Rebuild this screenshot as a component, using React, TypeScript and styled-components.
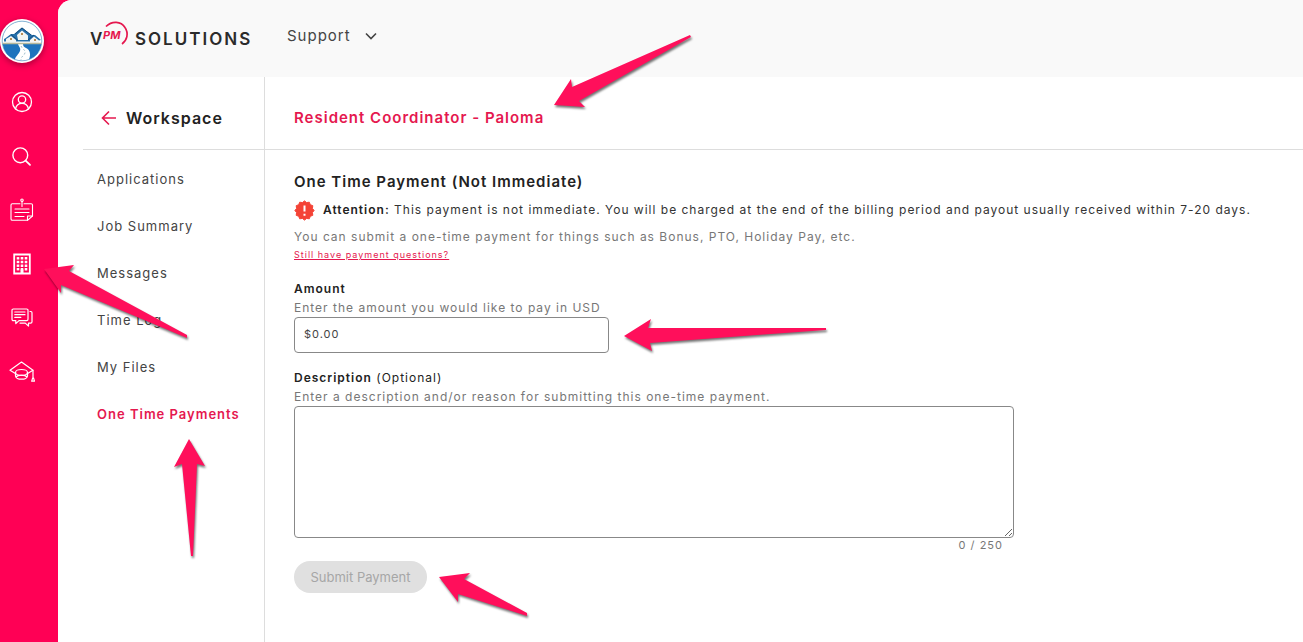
import React, { useState } from 'react';
import styled, { createGlobalStyle } from 'styled-components';

const pink = '#ff0055';
const brand = '#e5184f';

const GlobalStyle = createGlobalStyle`
  *, *::before, *::after { box-sizing: border-box; }
  body {
    margin: 0;
    background: #fff;
    color: #222;
    font-family: Inter, "Liberation Sans", sans-serif;
    letter-spacing: 1px;
  }
  button, input, textarea { font: inherit; letter-spacing: inherit; }
`;

const Shell = styled.div`
  position: relative;
  display: flex;
  min-height: 100vh;
  background: ${pink};
  overflow: hidden;
`;

const Rail = styled.nav`
  flex: none;
  width: 58px;
  padding: 19px 14px 0 0;
  display: flex;
  flex-direction: column;
  align-items: center;
  gap: 12px;
`;

const Avatar = styled.a`
  display: block;
  width: 44px;
  height: 44px;
  border-radius: 50%;
  box-shadow: 0 2px 6px rgba(0, 0, 0, 0.35);
  svg { display: block; }
`;

const RailList = styled.ul`
  margin: 0;
  padding: 0;
  list-style: none;
`;

const RailLink = styled.a`
  display: flex;
  align-items: center;
  justify-content: center;
  width: 44px;
  height: 54px;
`;

const Content = styled.div`
  flex: 1;
  min-width: 0;
  display: flex;
  flex-direction: column;
  background: #fff;
  border-top-left-radius: 14px;
  overflow: hidden;
`;

const TopBar = styled.header`
  display: flex;
  align-items: center;
  gap: 33px;
  height: 77px;
  padding: 0 32px 5px;
  background: #f9f9f9;
`;

const Logo = styled.a`
  display: block;
  height: 32px;
  svg { display: block; }
`;

const SupportButton = styled.button`
  display: flex;
  align-items: center;
  gap: 14px;
  padding: 0;
  border: 0;
  background: none;
  color: #444;
  font-size: 15px;
  line-height: 24px;
`;

const Columns = styled.div`
  flex: 1;
  display: flex;
`;

const Side = styled.aside`
  flex: none;
  width: 207px;
  padding-left: 25px;
  border-right: 1px solid #ddd;
`;

const SideHead = styled.div`
  display: flex;
  align-items: center;
  gap: 8px;
  height: 73px;
  padding: 10px 0 0 18px;
  border-bottom: 1px solid #ddd;
`;

const BackLink = styled.a`
  display: flex;
`;

const SideTitle = styled.h2`
  margin: 0;
  font-size: 16px;
  line-height: 24px;
  font-weight: 600;
`;

const SideList = styled.ul`
  margin: 0;
  padding: 5px 0 0 14px;
  list-style: none;
`;

const SideLink = styled.a<{ $active?: boolean }>`
  display: flex;
  align-items: center;
  height: 47px;
  font-size: 13px;
  white-space: nowrap;
  text-decoration: none;
  font-weight: ${(p) => (p.$active ? 600 : 400)};
  color: ${(p) => (p.$active ? brand : '#444')};
`;

const Main = styled.main`
  flex: 1;
  min-width: 0;
`;

const MainHead = styled.div`
  display: flex;
  align-items: center;
  height: 73px;
  padding: 10px 29px 0;
  border-bottom: 1px solid #ddd;
`;

const JobTitle = styled.h1`
  margin: 0;
  font-size: 15px;
  line-height: 24px;
  font-weight: 600;
  color: ${brand};
`;

const Form = styled.form`
  padding: 20px 29px;
  font-size: 12px;
  line-height: 20px;
`;

const FormTitle = styled.h3`
  margin: 0;
  font-size: 15px;
  line-height: 24px;
  font-weight: 600;
`;

const Notice = styled.p`
  display: flex;
  align-items: center;
  gap: 8px;
  margin: 4px 0 6px;
  line-height: 24px;
  color: #333;
  svg { flex: none; }
`;

const Strong = styled.strong`
  font-weight: 600;
  color: #222;
`;

const Hint = styled.p`
  margin: 0;
  line-height: 18px;
  color: #777;
`;

const HelpLink = styled.a`
  display: block;
  width: fit-content;
  font-size: 9px;
  line-height: 18px;
  color: ${brand};
`;

const Field = styled.div`
  margin-top: 15px;
`;

const Label = styled.label`
  display: block;
`;

const AmountInput = styled.input`
  display: block;
  width: 100%;
  max-width: 315px;
  height: 36px;
  padding: 0 9px 2px;
  border: 1px solid #888;
  border-radius: 4px;
  background: #fff;
  color: #444;
  font-size: 11px;
`;

const DescriptionBox = styled.div`
  max-width: 720px;
`;

const DescriptionInput = styled.textarea`
  display: block;
  width: 100%;
  height: 132px;
  padding: 8px 10px;
  border: 1px solid #888;
  border-radius: 4px;
  background: #fff;
  resize: vertical;
`;

const Counter = styled.div`
  padding-right: 11px;
  font-size: 11px;
  line-height: 15px;
  text-align: right;
  color: #777;
`;

const SubmitButton = styled.button`
  min-width: 133px;
  height: 32px;
  margin-top: 8px;
  padding: 0 14px;
  border: 0;
  border-radius: 16px;
  background: #e0e0e0;
  color: #a6a6a6;
  font-size: 13px;
  letter-spacing: 0;
`;

const Callouts = styled.svg`
  position: absolute;
  top: 0;
  left: 0;
  pointer-events: none;
  filter: drop-shadow(1px 2px 1px rgba(0, 0, 0, 0.55));
`;

const stroke = {
  fill: 'none',
  stroke: '#fff',
  strokeLinecap: 'round' as const,
  strokeLinejoin: 'round' as const,
};

const HouseBadge = () => (
  <svg width="44" height="44" viewBox="0 0 44 44" aria-hidden="true">
    <circle cx="22" cy="22" r="22" fill="#fff" />
    <circle cx="22" cy="22" r="19.8" fill="none" stroke="#4f8fc0" strokeWidth=".7" />
    <path d="M2.6 25h38.8A20 20 0 0 1 29 40.6C31 35 30 31 26 29c-2-1-3-2-3-4h-5c1 3 3 4 2 7s-5 6-5 8.6A20 20 0 0 1 2.6 25z" fill="#1d73bd" />
    <path d="M5 19.5l6-4.5h3l8-6.500 7 5.5 3 2h3l6 5-2 .5v1H4v-2.500z" fill="#2670ab" />
    <path d="M6 20l5-3 5 4v3H6zM17 16l5-4.500 6 5V21H18zM30 21l4-3.500 5 4V24h-9z" fill="#f2f5f3" />
    <path d="M11 15.500l7 6M22 9l-7 6M22 9l9 7M34 16l-6 5" fill="none" stroke="#174d7d" strokeWidth="1" />
    <path d="M21 14h2v2h-2zM10 19h2v2h-2zM34 20h2v2h-2z" fill="#b68c54" />
    <path d="M2.500 24.500h39" stroke="#b5b89c" strokeWidth="1.300" />
    <path d="M21 27c1 3 5 4 4 7s-4 3-4 7" fill="none" stroke="#87aebf" strokeWidth=".8" strokeDasharray="2 2" />
  </svg>
);

const UserIcon = () => (
  <svg width="22" height="22" viewBox="0 0 22 22" strokeWidth="1.300" {...stroke}>
    <circle cx="11" cy="11" r="9.500" />
    <circle cx="11" cy="8.500" r="3.700" />
    <path d="M4.500 17.800c.8-3.300 3-5.400 6.500-5.400s5.700 2.100 6.500 5.400" />
  </svg>
);

const SearchIcon = () => (
  <svg width="22" height="22" viewBox="0 0 22 22" strokeWidth="1.400" {...stroke}>
    <circle cx="9.300" cy="10.300" r="7.400" />
    <path d="M14.600 15.600l4.400 4.200" strokeWidth="1.800" />
  </svg>
);

const NoteIcon = () => (
  <svg width="24" height="24" viewBox="0 0 24 24" strokeWidth="1.100" {...stroke}>
    <path d="M10 5.700H2.300a1.300 1.300 0 0 0-1.300 1.300v14a1.300 1.300 0 0 0 1.300 1.300h15.200l5-4.300V7a1.300 1.300 0 0 0-1.300-1.300H14" />
    <path d="M17.500 22.300V18h5" />
    <circle cx="12" cy="2.200" r="1.200" />
    <path d="M12 3.500v5M5 11h14M5 14.500h14M5 18.500h9" />
  </svg>
);

const BuildingIcon = () => (
  <svg width="18" height="22" viewBox="0 0 18 22" aria-hidden="true">
    <path d="M1.200 1.500h15.600v19H1.200z" fill="none" stroke="#fff" strokeWidth="1.800" />
    {[5, 9, 13].map((x) =>
      [5.300, 9, 12.700, 16.200].map((y) => (
        <path key={`${x}-${y}`} d={`M${x - 1.300} ${y - 1.200}h2.600v2.400h-2.600z`} fill="#fff" />
      )),
    )}
    <path d="M7.500 20.500v-4h3v4" fill="#fff" />
  </svg>
);

const ChatIcon = () => (
  <svg width="22" height="22" viewBox="0 0 22 22" strokeWidth="1.200" {...stroke}>
    <path d="M2.300 2h13.400A1.300 1.300 0 0 1 17 3.300v9a1.300 1.300 0 0 1-1.300 1.300H8l-3.200 3v-3H2.300A1.300 1.300 0 0 1 1 12.300v-9A1.300 1.300 0 0 1 2.300 2z" />
    <path d="M19 4.500h.8A1.300 1.300 0 0 1 21 5.800v9a1.300 1.300 0 0 1-1.300 1.300H17.500v3l-3.200-3H9" />
    <path d="M3.800 5h10.200M3.800 7.700h10.200M3.800 10.400h6" />
  </svg>
);

const CapIcon = () => (
  <svg width="26" height="22" viewBox="0 0 26 22" strokeWidth="1.200" {...stroke}>
    <path d="M6 12.300l-5-3L12.500 1 24 9.300l-5 3" />
    <path d="M24 9.300V17M22.700 20.200l1-3.400h.8l1 3.400z" />
    <ellipse cx="12.500" cy="11.500" rx="6" ry="3" />
    <path d="M6.500 11.500v3.500c0 2 3 3.200 6 3.200s6-1.200 6-3.200v-3.500M7 16c2-2.400 9-2.400 11 0" />
  </svg>
);

const LogoMark = () => (
  <svg width="164" height="32" viewBox="0 0 164 32" aria-label="VPM Solutions" role="img">
    <g fontFamily="Inter, sans-serif" letterSpacing="0">
      <text x="0" y="25" fontSize="17" fontWeight="600" fill="#2b2b2b">V</text>
      <text x="13" y="19" fontSize="11" fontWeight="700" fontStyle="italic" fill={brand}>PM</text>
      <text x="45" y="25" fontSize="17" fontWeight="600" fill="#2b2b2b" letterSpacing="2">SOLUTIONS</text>
    </g>
    <path d="M16 6.500C22 .5 31 1 35 7.500c4 6 2 13-3 16.500" fill="none" stroke={brand} strokeWidth="1.700" />
  </svg>
);

const AlertBadge = () => {
  const points = Array.from({ length: 24 }, (_, i) => {
    const r = i % 2 ? 8.200 : 9.600;
    const a = (i * Math.PI) / 12;
    return `${10.500 + r * Math.sin(a)},${10.500 - r * Math.cos(a)}`;
  }).join(' ');
  return (
    <svg width="21" height="21" viewBox="0 0 21 21" aria-hidden="true">
      <polygon points={points} fill="#f44336" stroke="#f44336" strokeLinejoin="round" />
      <path d="M10.500 5.500v6M10.500 13.700v2" stroke="#fff" strokeWidth="2" />
    </svg>
  );
};

const railItems = [
  { label: 'Profile', Icon: UserIcon },
  { label: 'Search', Icon: SearchIcon },
  { label: 'Job posts', Icon: NoteIcon },
  { label: 'Workspace', Icon: BuildingIcon },
  { label: 'Chat', Icon: ChatIcon },
  { label: 'Training', Icon: CapIcon },
];

const sideItems = ['Applications', 'Job Summary', 'Messages', 'Time Log', 'My Files', 'One Time Payments'];

const arrows = [
  '554,105 571,79 572,87 690,35 691,37 579,101 585,107',
  '44,269 74,265 69,271 187,335 187,338 61,285 61,293',
  '624,336 651,319 648,328 826,328 826,330 650,343 652,351',
  '439,577 470,573 464,579 527,613 527,616 458,594 458,602',
  '189,439 205,466 197,464 193,556 191,556 182,464 174,467',
];

export default function App() {
  const [amount, setAmount] = useState('$0.00');
  const [description, setDescription] = useState('');

  return (
    <>
      <GlobalStyle />
      <Shell>
        <Rail aria-label="Primary">
          <Avatar href="#home" aria-label="Company">
            <HouseBadge />
          </Avatar>
          <RailList>
            {railItems.map(({ label, Icon }) => (
              <li key={label}>
                <RailLink href="#" aria-label={label}>
                  <Icon />
                </RailLink>
              </li>
            ))}
          </RailList>
        </Rail>
        <Content>
          <TopBar>
            <Logo href="#home">
              <LogoMark />
            </Logo>
            <SupportButton type="button">
              Support
              <svg width="12" height="8" viewBox="0 0 12 8" fill="none" stroke="#444" strokeWidth="1.600">
                <path d="M1 1.500l5 5 5-5" />
              </svg>
            </SupportButton>
          </TopBar>
          <Columns>
            <Side>
              <SideHead>
                <BackLink href="#back" aria-label="Back">
                  <svg width="17" height="16" viewBox="0 0 17 16" fill="none" stroke={brand} strokeWidth="1.600">
                    <path d="M8 1.500L1.500 8 8 14.500M1.500 8h13.500" />
                  </svg>
                </BackLink>
                <SideTitle>Workspace</SideTitle>
              </SideHead>
              <SideList>
                {sideItems.map((item) => (
                  <li key={item}>
                    <SideLink href="#" $active={item === 'One Time Payments'}>
                      {item}
                    </SideLink>
                  </li>
                ))}
              </SideList>
            </Side>
            <Main>
              <MainHead>
                <JobTitle>Resident Coordinator - Paloma</JobTitle>
              </MainHead>
              <Form onSubmit={(e) => e.preventDefault()}>
                <FormTitle>One Time Payment (Not Immediate)</FormTitle>
                <Notice>
                  <AlertBadge />
                  <span>
                    <Strong>Attention:</Strong> This payment is not immediate. You will be charged at the end of the
                    billing period and payout usually received within 7-20 days.
                  </span>
                </Notice>
                <Hint>You can submit a one-time payment for things such as Bonus, PTO, Holiday Pay, etc.</Hint>
                <HelpLink href="#help">Still have payment questions?</HelpLink>
                <Field>
                  <Label htmlFor="amount">
                    <Strong>Amount</Strong>
                  </Label>
                  <Hint>Enter the amount you would like to pay in USD</Hint>
                  <AmountInput id="amount" value={amount} onChange={(e) => setAmount(e.target.value)} />
                </Field>
                <Field>
                  <Label htmlFor="description">
                    <Strong>Description</Strong> (Optional)
                  </Label>
                  <Hint>Enter a description and/or reason for submitting this one-time payment.</Hint>
                  <DescriptionBox>
                    <DescriptionInput
                      id="description"
                      maxLength={250}
                      value={description}
                      onChange={(e) => setDescription(e.target.value)}
                    />
                    <Counter>{description.length} / 250</Counter>
                  </DescriptionBox>
                </Field>
                <SubmitButton type="submit" disabled>
                  Submit Payment
                </SubmitButton>
              </Form>
            </Main>
          </Columns>
        </Content>
        <Callouts width="840" height="630" viewBox="0 0 840 630" aria-hidden="true">
          {arrows.map((points) => (
            <polygon key={points} points={points} fill="#ff0f5b" />
          ))}
        </Callouts>
      </Shell>
    </>
  );
}
